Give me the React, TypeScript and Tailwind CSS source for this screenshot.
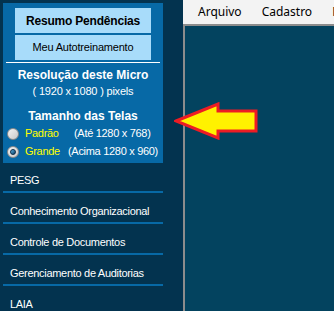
import React from "react"

const navItems = [
  "PESG",
  "Conhecimento Organizacional",
  "Controle de Documentos",
  "Gerenciamento de Auditorias",
  "LAIA",
]

function Radio({ checked }: { checked?: boolean }) {
  return (
    <span className="relative inline-flex shrink-0 w-[12px] h-[12px] rounded-full border border-[#8a8a8a] bg-gradient-to-br from-[#f4f4f4] to-[#c9c9c9] items-center justify-center">
      {checked && (
        <span className="w-[6px] h-[6px] rounded-full bg-gradient-to-br from-[#5ab4e6] to-[#0b3f66] border border-[#0a2d4a]" />
      )}
    </span>
  )
}

function Arrow() {
  return (
    <svg className="absolute left-[174px] top-[102px]" width="84" height="38" viewBox="0 0 84 38">
      <polygon
        points="2,19 44,2 44,9 82,9 82,29 44,29 44,36"
        fill="#fff200"
        stroke="#ed1c24"
        strokeWidth="3"
        strokeLinejoin="miter"
      />
    </svg>
  )
}

export default function App() {
  return (
    <div className="relative w-[334px] h-[311px] flex overflow-hidden bg-[#03334f] font-['Liberation_Sans',Arial,sans-serif]">
      {/* sidebar */}
      <div className="w-[183px] shrink-0 pt-[3px] pl-[3px]">
        <div className="w-[160px] h-[160px] bg-[#0769a6] pt-[5px] flex flex-col items-center whitespace-nowrap">
          <div className="shrink-0 w-[136px] h-[25px] bg-[#a8dcfa] flex items-center justify-center text-[12px] font-bold text-black tracking-[-0.2px]">
            Resumo Pendências
          </div>
          <div className="shrink-0 w-[136px] h-[25px] mt-[2px] bg-[#a8dcfa] flex items-center justify-center text-[11px] text-black tracking-[-0.2px]">
            Meu Autotreinamento
          </div>
          <div className="shrink-0 w-[154px] h-px bg-white mt-[2px]" />
          <div className="mt-[5px] text-[12px] font-bold text-white leading-[14px]">Resolução deste Micro</div>
          <div className="mt-[3px] text-[11px] text-white leading-[13px] tracking-[-0.2px]">( 1920 x 1080 ) pixels</div>
          <div className="mt-[11px] text-[12px] font-bold text-white leading-[14px]">Tamanho das Telas</div>
          <div className="self-start w-full pl-[4px] mt-[4px] flex flex-col gap-[5px] text-[11px] leading-[13px] tracking-[-0.3px]">
            <div className="flex items-center">
              <Radio />
              <span className="ml-[6px] w-[49px] text-[#ffff00]">Padrão</span>
              <span className="text-white">(Até 1280 x 768)</span>
            </div>
            <div className="flex items-center">
              <Radio checked />
              <span className="ml-[6px] w-[43px] text-[#ffff00]">Grande</span>
              <span className="text-white">(Acima 1280 x 960)</span>
            </div>
          </div>
        </div>
        <div className="w-[160px]">
          {navItems.map((item, i) => (
            <div
              key={item}
              className={`${i === 0 ? "h-[30px] pt-[11px]" : "h-[31px] pt-[12px]"} pl-[7px] border-b-2 border-[#0769a6] text-[11px] leading-[13px] text-white whitespace-nowrap tracking-[-0.3px]`}
            >
              {item}
            </div>
          ))}
        </div>
      </div>

      {/* main area */}
      <div className="flex-1 flex flex-col min-w-0">
        <div className="h-[24px] bg-[#f3f3f3] flex items-center pl-[5px] text-[12px] text-black font-['Noto_Sans',sans-serif] whitespace-nowrap overflow-hidden">
          <span className="px-[10px]">Arquivo</span>
          <span className="px-[10px]">Cadastro</span>
          <span className="px-[10px]">Manutenção</span>
        </div>
        <div className="flex-1 bg-[#03435f] border-l-2 border-t-2 border-[#8c8c8c]" />
      </div>

      <Arrow />
    </div>
  )
}
